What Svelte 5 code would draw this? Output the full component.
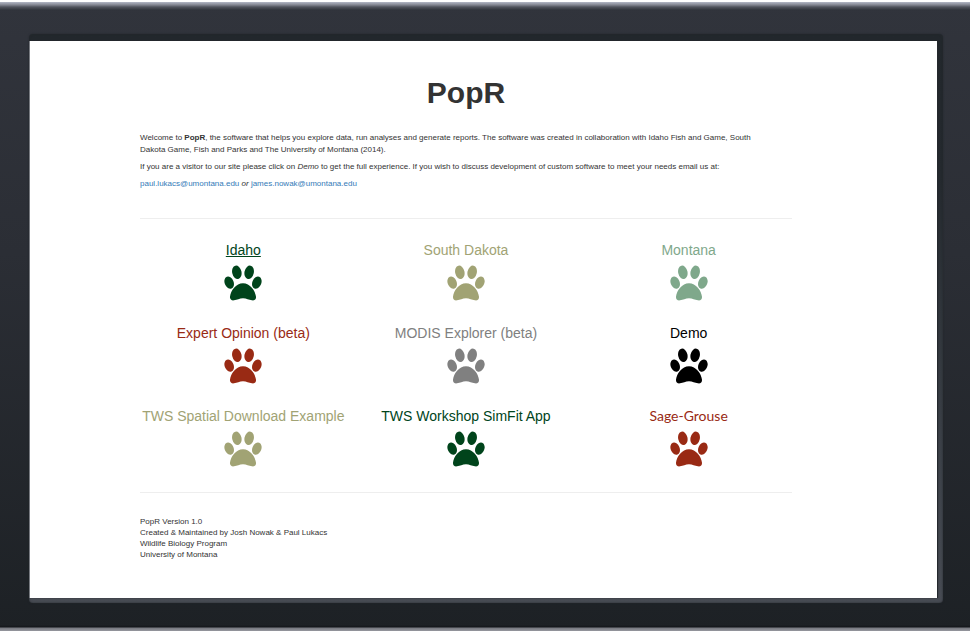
<script>
  const apps = [
    { name: 'Idaho', color: '#00441b', active: true },
    { name: 'South Dakota', color: '#a1a374' },
    { name: 'Montana', color: '#7fa88b' },
    { name: 'Expert Opinion (beta)', color: '#992a14' },
    { name: 'MODIS Explorer (beta)', color: '#808080' },
    { name: 'Demo', color: '#000000' },
    { name: 'TWS Spatial Download Example', color: '#a1a374' },
    { name: 'TWS Workshop SimFit App', color: '#00441b' },
    { name: 'Sage-Grouse', color: '#992a14', alt: true }
  ];
</script>

<div class="frame">
  <div class="bevel">
    <main class="panel">
      <div class="content">
        <h1>PopR</h1>
        <section class="intro">
          <p>Welcome to <strong>PopR</strong>, the software that helps you explore data, run analyses and generate reports. The software was created in collaboration with Idaho Fish and Game, South Dakota Game, Fish and Parks and The University of Montana (2014).</p>
          <p>If you are a visitor to our site please click on <em>Demo</em> to get the full experience. If you wish to discuss development of custom software to meet your needs email us at:</p>
          <p><a href="mailto:paul.lukacs@umontana.edu">paul.lukacs@umontana.edu</a> <em>or</em> <a href="mailto:james.nowak@umontana.edu">james.nowak@umontana.edu</a></p>
        </section>
        <hr />
        <nav class="grid">
          {#each apps as app}
            <a class="app" class:active={app.active} class:alt={app.alt} href="#{app.name}" style="color: {app.color}">
              <span>{app.name}</span>
              <svg viewBox="72 88 114 108" width="38" height="36" fill="currentColor" aria-hidden="true">
                <ellipse cx="110.500" cy="110" rx="14" ry="20.500" transform="rotate(-12 110.500 110)" />
                <ellipse cx="147.500" cy="110" rx="14" ry="20.500" transform="rotate(12 147.500 110)" />
                <ellipse cx="87.500" cy="141" rx="13.500" ry="19" transform="rotate(-22 87.500 141)" />
                <ellipse cx="170.500" cy="141" rx="13.500" ry="19" transform="rotate(22 170.500 141)" />
                <path d="M129 143C108 143 92 166 90 183C89 191 95 195 102 194C112 193 118 188 129 188C140 188 146 193 156 194C163 195 169 191 168 183C166 166 150 143 129 143Z" />
              </svg>
            </a>
          {/each}
        </nav>
        <hr />
        <footer>
          <div>PopR Version 1.0</div>
          <div>Created &amp; Maintained by Josh Nowak &amp; Paul Lukacs</div>
          <div>Wildlife Biology Program</div>
          <div>University of Montana</div>
        </footer>
      </div>
    </main>
  </div>
</div>

<style>
  .frame {
    box-sizing: border-box;
    min-height: 100vh;
    display: flex;
    padding: 34px 27px 28px 29px;
    background:
      linear-gradient(#fff 0 2px, #b3b7c6 2px, #80838e 5px, #50535d 7px, transparent 10px) top / 100% 10px no-repeat,
      linear-gradient(transparent, #14171b 2px, #777980 3px, #96979e 6px) bottom / 100% 6px no-repeat,
      linear-gradient(#31343c, #2b2e35 40%, #1d2125);
    font-family: "Liberation Sans", Arial, sans-serif;
    color: #333;
  }
  .bevel {
    flex: 1;
    display: flex;
    padding: 7px 6px 5px 0;
    border-radius: 4px;
    background: linear-gradient(#22272c, #24292e 25%, #3a3f46 70%, #474b53);
    box-shadow: 0 0 2px #24282d, inset 0 0 2px #24282d;
  }
  .panel {
    flex: 1;
    background: #fff;
    border-left: 1px solid #777a80;
    box-shadow: 1px 0 1px #24282d;
  }
  .content {
    margin: 0 145px 0 110px;
    padding: 34px 0;
  }
  h1 {
    margin: 0 0 21px;
    font-size: 30px;
    line-height: 36px;
    text-align: center;
  }
  .intro {
    margin-bottom: 28px;
    padding-right: 20px;
  }
  p {
    margin: 0 0 5px;
    font-size: 8px;
    line-height: 12px;
  }
  p a {
    color: #337ab7;
    text-decoration: none;
  }
  hr {
    margin: 25px 0 23px;
    border: 0;
    border-top: 1px solid #eee;
  }
  .grid {
    display: grid;
    grid-template-columns: repeat(3, 1fr);
    row-gap: 24px;
    margin: 0 -8px;
  }
  .app {
    display: flex;
    flex-direction: column;
    align-items: center;
    gap: 7px;
    font-size: 14px;
    line-height: 16px;
    text-decoration: none;
  }
  .app svg {
    display: block;
  }
  .active span {
    text-decoration: underline;
  }
  .alt span {
    font-family: Lato, "Open Sans", sans-serif;
  }
  footer {
    font-size: 8px;
    line-height: 11px;
  }
</style>
